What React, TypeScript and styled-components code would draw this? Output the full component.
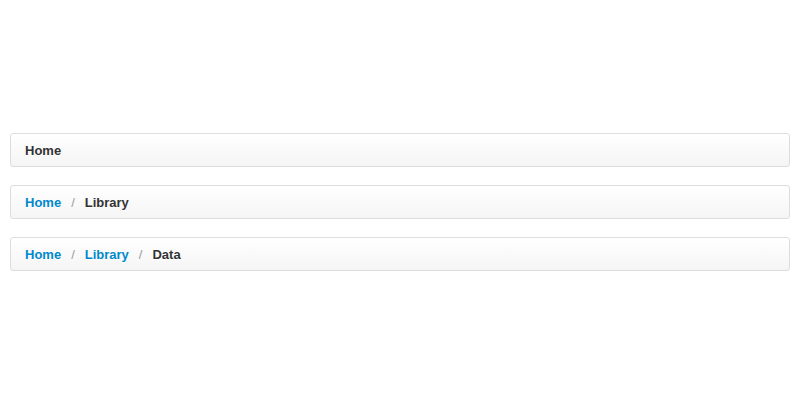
import React from "react";
import styled, { createGlobalStyle } from "styled-components";

const Global = createGlobalStyle`
  html, body { margin: 0; padding: 0; background: #fff; }
  body { font-family: "Liberation Sans", Arial, Helvetica, sans-serif; font-size: 13px; line-height: 18px; color: #333; }
`;

const Page = styled.div`
  padding: 133px 10px 0 10px;
`;

const Crumbs = styled.ul`
  list-style: none;
  margin: 0 0 18px 0;
  padding: 8px 14px 6px 14px;
  border: 1px solid #ddd;
  border-radius: 3px;
  background-image: linear-gradient(to bottom, #ffffff, #f5f5f5);
  box-shadow: inset 0 1px 0 #fff;
  display: flex;
  align-items: center;
`;

const Item = styled.li<{ $active?: boolean }>`
  display: inline-flex;
  align-items: center;
  font-weight: bold;
  color: ${(p) => (p.$active ? "#333" : "#0088cc")};
  text-shadow: 0 1px 0 #fff;
`;

const Link = styled.a`
  color: #0088cc;
  text-decoration: none;
`;

const Divider = styled.span`
  padding: 0 10px 0 10px;
  color: #999;
  font-weight: normal;
`;

type Crumb = { label: string };

const trails: Crumb[][] = [
  [{ label: "Home" }],
  [{ label: "Home" }, { label: "Library" }],
  [{ label: "Home" }, { label: "Library" }, { label: "Data" }],
];

export default function App() {
  return (
    <>
      <Global />
      <Page>
        {trails.map((trail, i) => (
          <Crumbs key={i}>
            {trail.map((c, j) => {
              const last = j === trail.length - 1;
              return (
                <Item key={j} $active={last}>
                  {last ? c.label : <Link href="#">{c.label}</Link>}
                  {!last && <Divider>/</Divider>}
                </Item>
              );
            })}
          </Crumbs>
        ))}
      </Page>
    </>
  );
}
